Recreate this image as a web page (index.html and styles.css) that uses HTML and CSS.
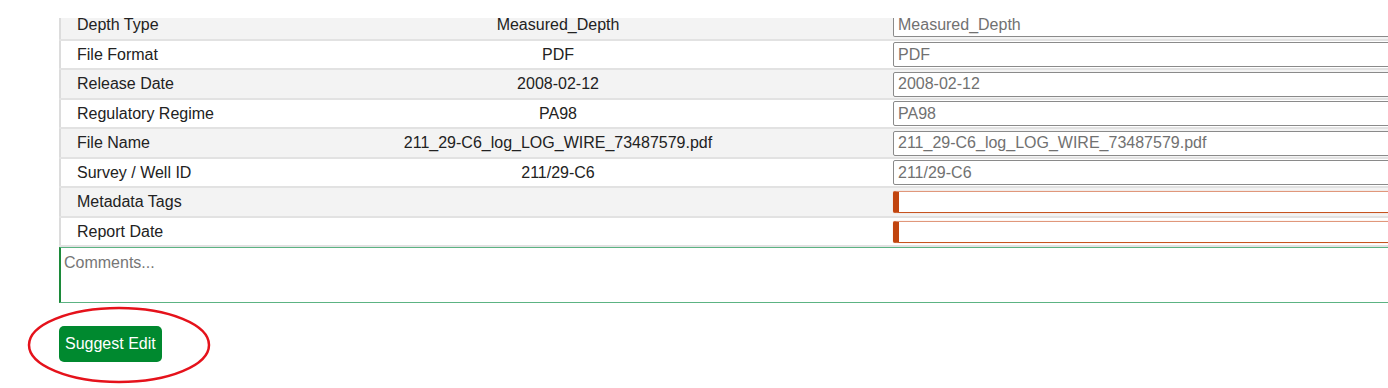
FILE: index.html
```html
<!DOCTYPE html>
<html lang="en">
<head>
  <meta charset="UTF-8">
  <title>Suggest Metadata Edit</title>
  <link rel="stylesheet" href="styles.css">
</head>
<body>
  <div class="page">
    <table class="meta">
      <colgroup>
        <col class="col-label">
        <col class="col-value">
        <col class="col-edit">
      </colgroup>
      <tr class="first">
        <td class="label">Depth Type</td>
        <td class="value">Measured_Depth</td>
        <td class="edit"><input type="text" class="cut" value="Measured_Depth"></td>
      </tr>
      <tr>
        <td class="label">File Format</td>
        <td class="value">PDF</td>
        <td class="edit"><input type="text" value="PDF"></td>
      </tr>
      <tr>
        <td class="label">Release Date</td>
        <td class="value">2008-02-12</td>
        <td class="edit"><input type="text" value="2008-02-12"></td>
      </tr>
      <tr>
        <td class="label">Regulatory Regime</td>
        <td class="value">PA98</td>
        <td class="edit"><input type="text" value="PA98"></td>
      </tr>
      <tr>
        <td class="label">File Name</td>
        <td class="value">211_29-C6_log_LOG_WIRE_73487579.pdf</td>
        <td class="edit"><input type="text" value="211_29-C6_log_LOG_WIRE_73487579.pdf"></td>
      </tr>
      <tr>
        <td class="label">Survey / Well ID</td>
        <td class="value">211/29-C6</td>
        <td class="edit"><input type="text" value="211/29-C6"></td>
      </tr>
      <tr>
        <td class="label">Metadata Tags</td>
        <td class="value"></td>
        <td class="edit"><input type="text" class="missing" value=""></td>
      </tr>
      <tr>
        <td class="label">Report Date</td>
        <td class="value"></td>
        <td class="edit"><input type="text" class="missing" value=""></td>
      </tr>
    </table>
    <textarea class="comments" placeholder="Comments..."></textarea>
    <div class="actions">
      <button type="button" class="btn">Suggest Edit</button>
      <!-- annotation ring drawn over the button -->
      <svg class="ring" width="184" height="78" viewBox="0 0 184 78">
        <ellipse cx="92" cy="39" rx="90" ry="37" fill="none" stroke="#e5121b" stroke-width="2.5"/>
      </svg>
    </div>
  </div>
</body>
</html>
```

FILE: styles.css
```css
html {
  overflow: hidden;
}
body {
  margin: 0;
  background: #fff;
  font-family: "Liberation Sans", Arial, sans-serif;
  font-size: 16px;
  color: #222;
}
.page {
  width: 1800px;
  padding: 18px 0 40px 59px;
}
.meta {
  border-collapse: collapse;
  table-layout: fixed;
  border-left: 2px solid #dcdcdc;
  width: 1530px;
}
.col-label { width: 166px; }
.col-value { width: 664px; }
.col-edit { width: 700px; }
.meta td {
  height: 28px;
  padding: 0;
  border-bottom: 2px solid #e2e2e2;
  vertical-align: middle;
  white-space: nowrap;
}
.meta tr:nth-child(even) td { height: 27px; }
.meta tr:nth-child(odd) td { background: #f3f3f3; }
.meta tr.first td {
  height: 21px;
  line-height: 13px;
  vertical-align: top;
}
.meta td.label { padding-left: 16px; }
.meta td.value { text-align: center; }
.meta td.edit { padding-left: 3px; }
.meta input {
  box-sizing: border-box;
  width: 700px;
  height: 25px;
  padding: 0 4px;
  font: 16px "Liberation Sans", Arial, sans-serif;
  color: #717171;
  background: #fff;
  border: 1px solid #8a8a8a;
  border-radius: 2px;
  display: block;
}
.meta input.cut {
  height: 19px;
  border-top: 0;
  border-radius: 0 0 2px 2px;
  padding-bottom: 5px;
}
.meta input.missing {
  height: 22px;
  border: 1px solid #c6531f;
  border-top-color: #e0977b;
  border-left: 6px solid #c1440e;
  box-shadow: 0 0 1px #eaa486;
}
.comments {
  display: block;
  box-sizing: border-box;
  width: 1530px;
  height: 56px;
  margin: 0;
  padding: 6px 3px 4px;
  font: 16px "Liberation Sans", Arial, sans-serif;
  border: 1px solid #5cb383;
  border-left: 2px solid #1c8a3a;
  resize: none;
}
.comments::placeholder { color: #767676; }
.actions {
  position: relative;
  margin-top: 23px;
}
.btn {
  background: #00892f;
  color: #fff;
  font: 16px "Liberation Sans", Arial, sans-serif;
  height: 36px;
  padding: 0 6px;
  border: none;
  border-radius: 5px;
  cursor: pointer;
}
.ring {
  position: absolute;
  left: -32px;
  top: -20px;
  pointer-events: none;
}
```
